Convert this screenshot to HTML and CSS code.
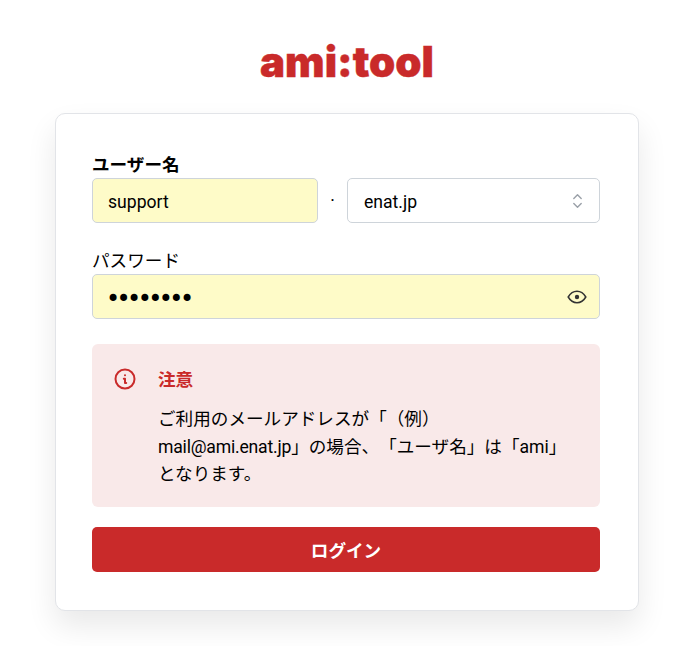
FILE: index.html
```html
<!DOCTYPE html>
<html lang="ja">
<head>
    <meta charset="UTF-8">
    <meta name="viewport" content="width=device-width, initial-scale=1.0">
    <title>ami:tool ログイン</title>
    <link rel="stylesheet" href="styles.css">
</head>
<body>
    <main class="page">
        <h1 class="logo">ami:tool</h1>

        <form class="card">
            <label class="label label-bold" for="user">ユーザー名</label>
            <div class="user-row">
                <input class="input input-filled" id="user" type="text" value="support">
                <span class="dot">·</span>
                <div class="select-wrap">
                    <select class="input select" aria-label="ドメイン">
                        <option>enat.jp</option>
                    </select>
                    <svg class="select-icon" width="15" height="18" viewBox="0 0 15 18" fill="none" stroke="#9aa0a8" stroke-width="1.4" stroke-linecap="round" stroke-linejoin="round">
                        <path d="M3.800 6.500 7.500 2.800l3.700 3.700"/>
                        <path d="M3.800 11.500l3.700 3.700 3.700-3.700"/>
                    </svg>
                </div>
            </div>

            <label class="label label-pass" for="pass">パスワード</label>
            <div class="pass-wrap">
                <input class="input input-filled input-pass" id="pass" type="password" value="support1">
                <svg class="eye-icon" width="20" height="14" viewBox="0 0 20 14" fill="none" stroke="#333" stroke-width="1.5">
                    <path d="M1.200 7C3.400 3.200 6.400 1.300 10 1.300S16.600 3.200 18.800 7C16.600 10.800 13.600 12.700 10 12.700S3.400 10.800 1.200 7Z"/>
                    <circle cx="10" cy="7" r="2.200" fill="#333" stroke="none"/>
                </svg>
            </div>

            <div class="alert">
                <svg class="alert-icon" width="22" height="22" viewBox="0 0 22 22" fill="none" stroke="#c92a2a" stroke-width="2" stroke-linecap="round" stroke-linejoin="round">
                    <circle cx="11" cy="11" r="9.500"/>
                    <path d="M11 7.300h.01"/>
                    <path d="M9.800 10.700H11v4.300h1.200"/>
                </svg>
                <div class="alert-body">
                    <div class="alert-title">注意</div>
                    <p class="alert-text">ご利用のメールアドレスが「（例）<br><span class="alert-mail">mail@ami.enat.jp</span>」の場合、「ユーザ名」は「ami」<br>となります。</p>
                </div>
            </div>

            <button class="btn" type="button">ログイン</button>
        </form>
    </main>
</body>
</html>
```

FILE: styles.css
```css
body {
    margin: 0;
    background-color: #fff;
    color: #000;
    font-family: Roboto, "Noto Sans CJK JP", sans-serif;
    font-size: 17.600px;
    text-spacing-trim: space-all;
}
.page {
    width: 584px;
    margin-left: 55px;
    padding-top: 37px;
    padding-bottom: 35px;
}
.logo {
    margin: 0 0 26px;
    color: #c92a2a;
    font-family: Inter, sans-serif;
    font-size: 42px;
    font-weight: 900;
    line-height: 50px;
    text-align: center;
    -webkit-text-stroke: 0.4px #c92a2a;
}
.card {
    padding: 40px 38px 38px 36px;
    background-color: #fff;
    border: 1px solid #e2e4e8;
    border-radius: 10px;
    box-shadow: 0 15px 30px rgba(0, 0, 0, 0.09);
}
.label {
    display: block;
    padding-bottom: 4px;
    line-height: 20px;
    font-family: "Noto Sans CJK JP", sans-serif;
}
.label-bold {
    font-weight: 700;
}
.label-pass {
    margin-top: 27px;
}
.user-row {
    display: flex;
    align-items: center;
}
.dot {
    width: 29px;
    text-align: center;
}
.select-wrap {
    position: relative;
    width: 253px;
}
.input {
    box-sizing: border-box;
    width: 100%;
    height: 45px;
    padding: 2px 15px 0;
    background-color: #fff;
    border: 1px solid #ced4da;
    border-radius: 5px;
    color: #000;
    font-family: Roboto, sans-serif;
    font-size: 17.600px;
}
#user {
    width: 226px;
}
.input-filled {
    background-color: #fefbc8;
}
.select {
    padding-left: 16px;
    appearance: none;
}
.select-icon {
    position: absolute;
    top: 14px;
    right: 15px;
}
.pass-wrap {
    position: relative;
}
.input-pass {
    padding: 5px 44px 0 13px;
    font-family: "DejaVu Sans", sans-serif;
    font-size: 24px;
    letter-spacing: -3.600px;
}
.eye-icon {
    position: absolute;
    top: 16px;
    right: 13px;
}
.alert {
    display: flex;
    margin-top: 25px;
    padding: 23px 24px 18px 22px;
    background-color: #f9e9e9;
    border-radius: 6px;
}
.alert-icon {
    flex: none;
    margin-top: 1px;
    margin-right: 22px;
}
.alert-title {
    color: #c92a2a;
    font-family: "Noto Sans CJK JP", sans-serif;
    font-weight: 700;
    line-height: 24px;
}
.alert-text {
    margin: 15px 0 0;
    line-height: 27.500px;
}
.alert-mail {
    letter-spacing: -0.200px;
}
.btn {
    display: block;
    width: 100%;
    height: 45px;
    margin-top: 20px;
    background-color: #c92a2a;
    border: none;
    border-radius: 5px;
    color: #fff;
    font-family: "Noto Sans CJK JP", sans-serif;
    font-size: 17.600px;
    font-weight: 700;
    cursor: pointer;
}
```
